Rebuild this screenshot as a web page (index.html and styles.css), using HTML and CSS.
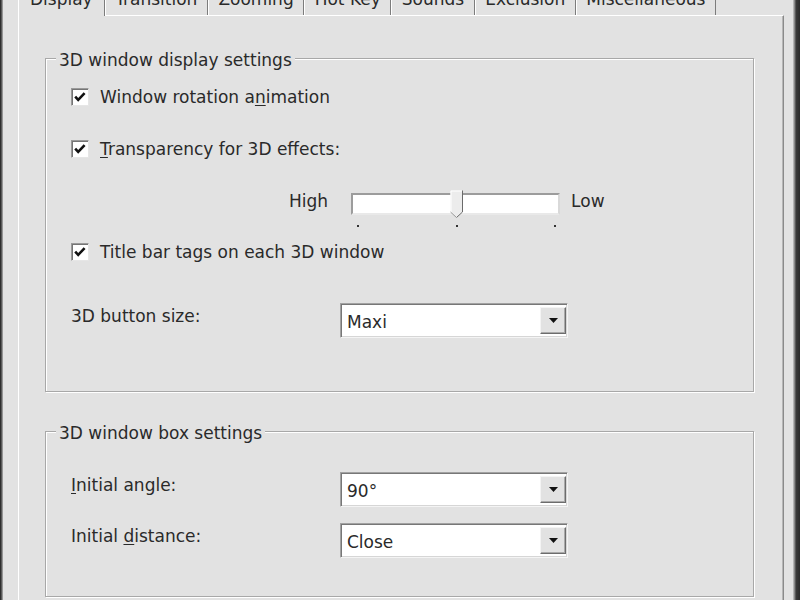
FILE: index.html
```html
<!DOCTYPE html>
<html>
<head>
<meta charset="utf-8">
<title>3D Window Settings</title>
<link rel="stylesheet" href="styles.css">
</head>
<body>
<div class="window">
  <div class="edge-left"></div>
  <div class="client">
    <div class="tabs">
      <div class="tab selected">Display</div>
      <div class="tab">Transition</div>
      <div class="tab">Zooming</div>
      <div class="tab">Hot Key</div>
      <div class="tab">Sounds</div>
      <div class="tab">Exclusion</div>
      <div class="tab">Miscellaneous</div>
    </div>
    <div class="panel">
      <div class="group group-display">
        <div class="group-title">3D window display settings</div>
        <div class="check-row row-first">
          <span class="checkbox"><svg viewBox="0 0 16 16" width="16" height="16"><path d="M3.2 7.6 L6.2 10.8 L12.6 4.2" fill="none" stroke="#111" stroke-width="2.6"/></svg></span>
          <span>Window rotation a<u>n</u>imation</span>
        </div>
        <div class="check-row row-second">
          <span class="checkbox"><svg viewBox="0 0 16 16" width="16" height="16"><path d="M3.2 7.6 L6.2 10.8 L12.6 4.2" fill="none" stroke="#111" stroke-width="2.6"/></svg></span>
          <span><u>T</u>ransparency for 3D effects:</span>
        </div>
        <div class="slider-row">
          <span class="slider-label">High</span>
          <div class="slider">
            <div class="track">
              <svg class="thumb" viewBox="0 0 13 28" width="13" height="28">
                <path d="M0.5 0.5 H12.5 V22 L6.5 27.5 L0.5 22 Z" fill="#ececec"/>
                <path d="M1 22 V1 H12" fill="none" stroke="#ffffff" stroke-width="1"/>
                <path d="M12.5 0.5 V22 L6.5 27.5" fill="none" stroke="#6a6a6a" stroke-width="1"/>
                <path d="M0.5 22 L6.5 27.5" fill="none" stroke="#9a9a9a" stroke-width="1"/>
              </svg>
            </div>
            <div class="ticks"><span class="tick"></span><span class="tick"></span><span class="tick"></span></div>
          </div>
          <span class="slider-label">Low</span>
        </div>
        <div class="check-row row-third">
          <span class="checkbox"><svg viewBox="0 0 16 16" width="16" height="16"><path d="M3.2 7.6 L6.2 10.8 L12.6 4.2" fill="none" stroke="#111" stroke-width="2.6"/></svg></span>
          <span>Title bar tags on each 3D window</span>
        </div>
        <div class="field-row field-after-check">
          <span class="field-label">3D button size:</span>
          <div class="combo">
            <span class="combo-text">Maxi</span>
            <span class="combo-btn"><svg viewBox="0 0 9 5" width="9" height="5"><polygon points="0,0 9,0 4.5,5" fill="#111"/></svg></span>
          </div>
        </div>
      </div>

      <div class="group group-box">
        <div class="group-title">3D window box settings</div>
        <div class="field-row field-first">
          <span class="field-label"><u>I</u>nitial angle:</span>
          <div class="combo">
            <span class="combo-text">90°</span>
            <span class="combo-btn"><svg viewBox="0 0 9 5" width="9" height="5"><polygon points="0,0 9,0 4.5,5" fill="#111"/></svg></span>
          </div>
        </div>
        <div class="field-row field-next">
          <span class="field-label">Initial <u>d</u>istance:</span>
          <div class="combo">
            <span class="combo-text">Close</span>
            <span class="combo-btn"><svg viewBox="0 0 9 5" width="9" height="5"><polygon points="0,0 9,0 4.5,5" fill="#111"/></svg></span>
          </div>
        </div>
      </div>
    </div>
  </div>
  <div class="edge-right"></div>
</div>
</body>
</html>
```

FILE: styles.css
```css
html, body {
  margin: 0;
  height: 600px;
  overflow: hidden;
}

body {
  background: #e2e2e2;
  font-family: "DejaVu Sans", "Noto Sans", sans-serif;
  font-size: 17px;
  line-height: 20px;
  color: #2a2a2a;
}

u {
  text-decoration-thickness: 1px;
  text-underline-offset: 2px;
}

.window {
  display: flex;
  height: 600px;
}

.edge-left {
  flex: none;
  width: 3px;
  background: linear-gradient(to right, #222 0, #3a3a3a 1px, #7a7a7a 2px, #b0b0b0 3px);
}

.edge-right {
  flex: none;
  width: 7px;
  background: linear-gradient(to right, #cfcfcf 0, #9a9a9a 1px, #777 2px, #3a3a3a 3px, #2a2a2a 7px);
}

.client {
  flex: 1;
  min-width: 0;
  display: flex;
  flex-direction: column;
  padding: 0 9px 0 15px;
}

/* Tabs */
.tabs {
  display: flex;
  height: 29px;
  margin-top: -14px;
}

.tab {
  padding: 3px 9.5px 6px;
  border-left: 1px solid #ffffff;
  border-right: 1px solid #7c7c7c;
  white-space: nowrap;
}

.tab.selected {
  position: relative;
  z-index: 1;
  margin-bottom: -1px;
  padding: 3px 11px 6px;
  background: #e2e2e2;
}

/* Panel */
.panel {
  flex: 1;
  border-top: 1px solid #ffffff;
  border-left: 1px solid #ffffff;
  border-right: 1px solid #8a8a8a;
  box-shadow: inset -1px 0 0 #b6b6b6;
  padding: 0 29px 0 26px;
}

.group {
  border: 1px solid #a8a8a8;
  box-shadow: 1px 1px 0 #ffffff, inset 1px 1px 0 #ffffff;
  padding: 0 0 0 25px;
}

.group-display {
  margin-top: 42px;
  padding-bottom: 53px;
}

.group-box {
  margin-top: 39px;
  padding-bottom: 38px;
}

.group-title {
  width: max-content;
  margin: -9px 0 0 -15px;
  padding: 0 3px;
  background: #e2e2e2;
}

/* Checkboxes */
.check-row {
  display: flex;
  align-items: center;
  gap: 11px;
  height: 20px;
}

.row-first { margin-top: 17px; }
.row-second { margin-top: 32px; }
.row-third { margin-top: 15px; }

.checkbox {
  flex: none;
  width: 18px;
  height: 18px;
  box-sizing: border-box;
  background: #ffffff;
  border: 1px solid;
  border-color: #9a9a9a #e6e6e6 #e6e6e6 #9a9a9a;
  box-shadow: inset 1px 1px 0 #757575;
  margin-top: -1px;
}

.checkbox svg {
  display: block;
}

/* Slider */
.slider-row {
  display: flex;
  align-items: flex-start;
  margin: 34px 0 0 218px;
}

.slider-label {
  margin-top: -2px;
}

.slider {
  width: 209px;
  margin: 0 11px 0 23px;
}

.track {
  position: relative;
  height: 22px;
  box-sizing: border-box;
  background: #ffffff;
  border: 2px solid;
  border-color: #9c9c9c #d9d9d9 #e9e9e9 #9c9c9c;
}

.thumb {
  position: absolute;
  left: 97px;
  top: -5px;
  display: block;
}

.ticks {
  display: flex;
  justify-content: space-between;
  margin-top: 10px;
  padding: 0 4px 0 6px;
}

.tick {
  width: 2px;
  height: 2px;
  background: #333;
}

/* Combo fields */
.field-row {
  display: flex;
  align-items: flex-start;
}

.field-after-check { margin-top: 41px; }
.field-first { margin-top: 29px; }
.field-next { margin-top: 16px; }

.field-label {
  flex: none;
  width: 269px;
  padding-top: 3px;
}

.combo {
  display: flex;
  align-items: center;
  width: 228px;
  height: 35px;
  box-sizing: border-box;
  background: #ffffff;
  border: 1px solid;
  border-color: #a2a2a2 #f4f4f4 #f4f4f4 #a2a2a2;
  box-shadow: inset 1px 1px 0 #777, inset -1px -1px 0 #d6d6d6;
}

.combo-text {
  flex: 1;
  padding-left: 6px;
  padding-top: 2px;
}

.combo-btn {
  display: flex;
  align-items: center;
  justify-content: center;
  width: 26px;
  height: 27px;
  margin-right: 1px;
  box-sizing: border-box;
  background: #e2e2e2;
  border: 1px solid;
  border-color: #f4f4f4 #6c6c6c #6c6c6c #f4f4f4;
  box-shadow: inset -1px -1px 0 #a9a9a9;
}

.combo-btn svg {
  display: block;
}
```
